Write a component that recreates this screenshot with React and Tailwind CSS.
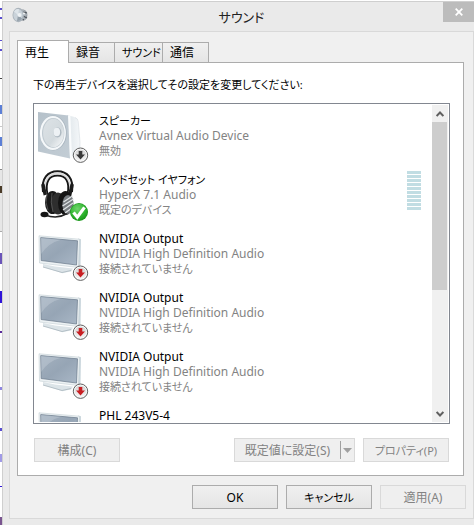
import { useState } from "react";
import clsx from "clsx";

const tabs = [
    {name:"再生", style:"w-[52px]"},
    {name:"録音", style:"w-[47px]"},
    {name:"サウンド", style:"w-[49px] text-[11px]"},
    {name:"通信", style:"w-[47px]"},
]

const devices = [
    {id:1, icon:"speaker", badge:"disabled", name:"スピーカー", driver:"Avnex Virtual Audio Device", status:"無効"},
    {id:2, icon:"headset", badge:"default", name:"ヘッドセット イヤフォン", driver:"HyperX 7.1 Audio", status:"既定のデバイス", meter:true},
    {id:3, icon:"monitor", badge:"unplugged", name:"NVIDIA Output", driver:"NVIDIA High Definition Audio", status:"接続されていません"},
    {id:4, icon:"monitor", badge:"unplugged", name:"NVIDIA Output", driver:"NVIDIA High Definition Audio", status:"接続されていません"},
    {id:5, icon:"monitor", badge:"unplugged", name:"NVIDIA Output", driver:"NVIDIA High Definition Audio", status:"接続されていません"},
    {id:6, icon:"monitor", badge:"unplugged", name:"PHL 243V5-4"},
]

// slices of the page that is behind the window
const slices = [
    "h-[7px]", "h-[2px] bg-[#5a4fd0]", "h-[7px]", "h-[2px] bg-[#5a4fd0]", "h-[21px]", "h-px bg-[#5a4fd0]",
    "h-[8px]", "h-[2px] bg-[#5a4fd0]", "h-[27px]", "h-px bg-[#444444]", "h-[26px]", "h-[9px] bg-[#5c7fd6]",
    "h-[12px]", "h-px bg-[#c8c8c8]", "h-[10px]", "h-[9px] bg-[#5c7fd6]", "h-[23px]", "h-px bg-[#888888]",
    "h-[16px] bg-[#e6e6e6]", "h-[7px] bg-[#4a3b28]", "h-[38px] bg-[#e6e6e6]", "h-px bg-[#aaaaaa]", "h-[21px]",
    "h-[11px] bg-[#6a54b8]", "h-[27px]", "h-[12px] bg-[#2f14d8]", "h-[28px]", "h-[2px] bg-[#5b2a9a]",
    "h-[54px]", "h-[3px] bg-[#8f86e0]", "h-[38px]", "h-[3px] bg-[#5a4fd0]", "h-[23px]", "h-[8px] bg-[#a09ae6]",
    "h-[24px]", "h-px bg-[#2f14d8]", "h-[30px]", "h-[9px] bg-[#7a5590]",
]

function SoundIcon(){
    return(
        <svg className="w-4 h-4" viewBox="0 0 16 16" aria-hidden="true">
            <ellipse cx="11" cy="8" rx="4.4" ry="5.6" fill="#8d949b"/>
            <path d="M8 2l4 1 3 4-2 6-5 1z" fill="#a9b0b7"/>
            <path d="M11 5l4 1M11 9l4 2M10 12l2 1" stroke="#4c5258" strokeWidth="1.2"/>
            <ellipse cx="6.3" cy="8" rx="5.8" ry="7.2" fill="#aab3bb"/>
            <ellipse cx="6" cy="8" rx="4.7" ry="6.1" fill="#c9d2d9"/>
            <path d="M6 8L2 4.500Q4 1.500 7 2.200z" fill="#dde4e9"/>
            <path d="M6 8l4 3.500Q8 14.500 5 14z" fill="#95a1ab"/>
            <circle cx="7.500" cy="8" r="2" fill="#eef2f5"/>
            <circle cx="12" cy="6.500" r="1" fill="#f4f6f7"/>
        </svg>
    )
}

function Badge({type}){
    if(type === "default"){
        return(
            <g>
                <circle cx="41" cy="42" r="9" fill="#1f9a1f"/>
                <circle cx="41" cy="42" r="8.300" fill="url(#greenBall)"/>
                <path d="M35.500 42.500l3.800 4.700 7.200-9.800" fill="none" stroke="#fff" strokeWidth="3.200"/>
            </g>
        )
    }
    const color = type === "unplugged" ? "#c81e22" : "#3a3a3a"
    return(
        <g>
            <circle cx="42.500" cy="44.200" r="7.200" fill="#fbfbfb" stroke="#5f5f5f" strokeWidth="1"/>
            <circle cx="42.500" cy="44.200" r="5.800" fill="url(#badgeGrey)"/>
            <path d="M40.700 40h3.600v3.500h2.700l-4.500 4.900-4.500-4.900h2.700z" fill={color}/>
        </g>
    )
}

function Speaker(){
    return(
        <g>
            <path d="M29 4l7.500 2q3 1 3.400 4L42 31q.2 9-3 12l-7 4z" fill="url(#speakerSide)"/>
            <path d="M37 6.500q3 1 3.200 4L42 31q.2 9-3 12" fill="none" stroke="#d5dce1" strokeWidth=".6"/>
            <path d="M0 1l30.500 3.500L32 47.500 0 40.500z" fill="url(#speakerFront)"/>
            <path d="M30 4.300l2.400.4L34 46.500l-2 1z" fill="#fafcfd"/>
            <ellipse cx="15.300" cy="22" rx="13.500" ry="17.500" fill="#a9b5bf"/>
            <ellipse cx="14.900" cy="22" rx="13" ry="17" fill="#f5f8fa"/>
            <ellipse cx="15.200" cy="22" rx="11.200" ry="15" fill="#bfc9d0"/>
            <ellipse cx="15.500" cy="22" rx="10.400" ry="14.200" fill="url(#cone)"/>
            <ellipse cx="19.500" cy="21.500" rx="4" ry="5" fill="#aeb9c1"/>
            <ellipse cx="18.800" cy="21" rx="3.300" ry="4.300" fill="#edf1f4"/>
        </g>
    )
}

function Headset(){
    return(
        <g fill="none">
            <path d="M3 22C1 8 8 1.200 17.500 1.200S34 8 32 22" stroke="#1a1a1a" strokeWidth="2"/>
            <path d="M5.500 18C5 9 10 3.500 17.500 3.500S30 9 29.500 18" stroke="#dadada" strokeWidth="2"/>
            <path d="M7.500 24C5 12 9 5.700 17.500 5.700S30 12 27.500 24" stroke="#151515" strokeWidth="1.800"/>
            <path d="M2.800 14l2.500 11M32.200 14l-2.500 11" stroke="#1c1c1c" strokeWidth="3.400"/>
            <ellipse cx="12.500" cy="32.500" rx="7.500" ry="11.500" fill="#191919"/>
            <ellipse cx="18" cy="33.500" rx="7" ry="11" fill="#2e2e2e"/>
            <path d="M7 25q-2.500 7 1 15M12 23q-2 9 1 19" stroke="#5c5c5c" strokeWidth=".8"/>
            <ellipse cx="25.500" cy="33" rx="7.500" ry="12" fill="#141414"/>
            <ellipse cx="28" cy="34.500" rx="5.600" ry="9.500" fill="#777c80"/>
            <path d="M23.500 32l9-6M22.500 36l11-7M23 40l10-7M25 43l7-5" stroke="#dfe3e5" strokeWidth="1.300"/>
            <path d="M26 44Q17 49.500 5 45" stroke="#222" strokeWidth="1.500"/>
            <ellipse cx="4.500" cy="44.500" rx="4" ry="2.800" fill="#151515"/>
        </g>
    )
}

function Monitor(){
    return(
        <g>
            <path d="M5 35l12 2.500 18 2-1.500 2.700-9 2L5 38z" fill="#dce4e8"/>
            <path d="M5 38l19 5.500 9-2" fill="none" stroke="#a8b5bd" strokeWidth=".8"/>
            <path d="M40 9.500l3 .7L42.500 37l-4 1.500z" fill="#cbd7dd"/>
            <path d="M1 6.800l40.500 3.400L40.500 38.500 1.500 34z" fill="#edf2f4" stroke="#c3ced4" strokeWidth=".6"/>
            <path d="M2.700 8.600l36.800 3.200L38.500 36 3.200 31.500z" fill="url(#screen)" stroke="#68798a" strokeWidth=".7"/>
            <path d="M3 9l20 1.700Q10 14 3.200 25z" fill="#c7d1db" opacity=".4"/>
        </g>
    )
}

function DeviceIcon({icon,badge}){
    return(
        <svg className="w-[52px] h-[53px] shrink-0" viewBox="0 0 52 53" aria-hidden="true">
            {icon === "speaker" && <Speaker/>}
            {icon === "headset" && <g transform="translate(2 0)"><Headset/></g>}
            {icon === "monitor" && <Monitor/>}
            <Badge type={badge}/>
        </svg>
    )
}

function Gradients(){
    return(
        <svg className="absolute w-0 h-0" aria-hidden="true">
            <defs>
                <linearGradient id="speakerFront" x1="0" y1="0" x2="1" y2="1">
                    <stop offset="0" stopColor="#b5c1ca"/>
                    <stop offset="1" stopColor="#c3cdd5"/>
                </linearGradient>
                <linearGradient id="speakerSide">
                    <stop offset="0" stopColor="#dfe6ea"/>
                    <stop offset="1" stopColor="#f4f7f9"/>
                </linearGradient>
                <linearGradient id="cone" x1="0" y1="0" x2="1" y2="1">
                    <stop offset="0" stopColor="#dce2e6"/>
                    <stop offset=".6" stopColor="#d3dade"/>
                    <stop offset="1" stopColor="#fafbfc"/>
                </linearGradient>
                <linearGradient id="screen" x1="0" y1="0" x2="1" y2="1">
                    <stop offset="0" stopColor="#a4b1bf"/>
                    <stop offset=".5" stopColor="#96a5b5"/>
                    <stop offset="1" stopColor="#a9b7c6"/>
                </linearGradient>
                <linearGradient id="badgeGrey" x1="0" y1="0" x2="0" y2="1">
                    <stop offset="0" stopColor="#d2d2d2"/>
                    <stop offset="1" stopColor="#f4f4f4"/>
                </linearGradient>
                <radialGradient id="greenBall" cx=".4" cy=".3" r=".8">
                    <stop offset="0" stopColor="#6fd46a"/>
                    <stop offset=".6" stopColor="#2fb52f"/>
                    <stop offset="1" stopColor="#159015"/>
                </radialGradient>
            </defs>
        </svg>
    )
}

function LevelMeter(){
    return(
        <div className="flex flex-col gap-px w-[14px] mt-px">
            {Array.from({length:10}).map((_,index)=>(
                <span className="h-[3px] bg-[#c1dde3]" key={index}></span>
            ))}
        </div>
    )
}

function Button({children,disabled,className}){
    return(
        <button type="button" disabled={disabled} className={clsx("h-6 border flex items-center justify-center whitespace-nowrap", disabled ? "bg-[#efefef] border-[#d9d9d9] text-[#838383]" : "bg-linear-to-b from-[#f0f0f0] to-[#e5e5e5] border-[#acacac] text-black", className || "w-[86px]")}>
            {children}
        </button>
    )
}

export default function App(){

    const [activeTab,setActiveTab] = useState("再生")

    return(
        <div className="flex pt-px min-h-screen overflow-hidden bg-white text-[12px] leading-[15px] text-black font-['Noto_Sans','Noto_Sans_CJK_JP',sans-serif] [font-feature-settings:'palt']">
            <Gradients/>
            <div className="w-[2px] shrink-0 flex flex-col" aria-hidden="true">
                {slices.map((slice,index)=>(
                    <span className={clsx("shrink-0", slice)} key={index}></span>
                ))}
            </div>

            <div className="flex-1 min-w-0 bg-[#eaeaea] border-l border-t border-[#cfcfcf] flex flex-col pl-[6px]">
                {/* title bar */}
                <header className="h-[29px] flex items-start">
                    <div className="w-[31px] pl-[3px] pt-[5px]"><SoundIcon/></div>
                    <h1 className="flex-1 text-center text-[13px] leading-[30px] text-[#222222]">サウンド</h1>
                    <button type="button" aria-label="閉じる" className="w-[31px] h-5 bg-[#bcbcbc] flex items-center justify-center">
                        <svg className="w-2 h-2" viewBox="0 0 8 8" aria-hidden="true"><path d="M.7.7l6.600 6.600M7.300.7L.7 7.300" stroke="#fff" strokeWidth="1.800"/></svg>
                    </button>
                </header>

                <main className="bg-[#f0f0f0] border border-[#d9d9d9] pt-2 pl-[7px] pr-[7px] pb-[9px]">
                    <div className="flex items-end relative z-10" role="tablist">
                        {tabs.map((tab,index)=>(
                            <button type="button" role="tab" aria-selected={activeTab === tab.name} onClick={()=>setActiveTab(tab.name)} key={tab.name} className={clsx("border border-[#acacac] text-left whitespace-nowrap pl-[7px]", tab.style, index > 0 && "-ml-px", activeTab === tab.name ? "h-[23px] -mb-px bg-white border-b-0" : "h-5 bg-linear-to-b from-[#f0f0f0] to-[#e5e5e5] border-b-0")}>
                                {tab.name}
                            </button>
                        ))}
                    </div>

                    <section className="bg-white border border-[#acacac] mr-[2px] pt-[14px] pl-[15px] pr-[13px] pb-[13px]">
                        <p className="whitespace-nowrap text-[11px]">下の再生デバイスを選択してその設定を変更してください:</p>

                        <div className="mt-[11px] h-[321px] border border-[#828790] bg-white p-px flex">
                            <ul className="flex-1 min-w-0 h-full overflow-hidden pt-1">
                                {devices.map((device)=>(
                                    <li className="h-[59px] pl-[3px] pr-[11px] pt-[2px] flex" key={device.id}>
                                        <DeviceIcon icon={device.icon} badge={device.badge}/>
                                        <div className="flex-1 min-w-0 pl-[9px] pt-[2px] whitespace-nowrap">
                                            <p className={clsx(device.icon !== "monitor" && "text-[11px]")}>{device.name}</p>
                                            <p className="text-[#838383]">{device.driver}</p>
                                            <p className="text-[11px] text-[#838383]">{device.status}</p>
                                        </div>
                                        {device.meter && <LevelMeter/>}
                                    </li>
                                ))}
                            </ul>
                            <div className="w-4 bg-[#f0f0f0] flex flex-col">
                                <button type="button" aria-label="上へ" className="h-[17px] flex items-center justify-center">
                                    <svg className="w-2 h-[6px]" viewBox="0 0 8 6" aria-hidden="true"><path d="M.6 5L4 1.500 7.400 5" fill="none" stroke="#606060" strokeWidth="2"/></svg>
                                </button>
                                <div className="h-[168px] w-[15px] bg-[#cdcdcd]"></div>
                                <button type="button" aria-label="下へ" className="h-[17px] mt-auto flex items-center justify-center">
                                    <svg className="w-2 h-[6px]" viewBox="0 0 8 6" aria-hidden="true"><path d="M.6 1L4 4.500 7.400 1" fill="none" stroke="#606060" strokeWidth="2"/></svg>
                                </button>
                            </div>
                        </div>

                        <div className="mt-[14px] px-px flex">
                            <Button disabled>構成(C)</Button>
                            <Button disabled className="w-[121px] ml-auto mr-2">
                                <span className="flex-1 text-center">既定値に設定(S)</span>
                                <span className="w-px h-[18px] bg-[#a0a0a0]"></span>
                                <svg className="w-[13px] h-[5px]" viewBox="0 0 13 5" aria-hidden="true"><path d="M2 0h9L6.500 5z" fill="#a0a0a0"/></svg>
                            </Button>
                            <Button disabled className="w-[86px] text-[11px]">プロパティ(P)</Button>
                        </div>
                    </section>

                    <div className="mt-[9px] flex justify-end gap-2">
                        <Button>OK</Button>
                        <Button className="w-[86px] text-[11px]">キャンセル</Button>
                        <Button disabled>適用(A)</Button>
                    </div>
                </main>
            </div>
        </div>
    )
}
